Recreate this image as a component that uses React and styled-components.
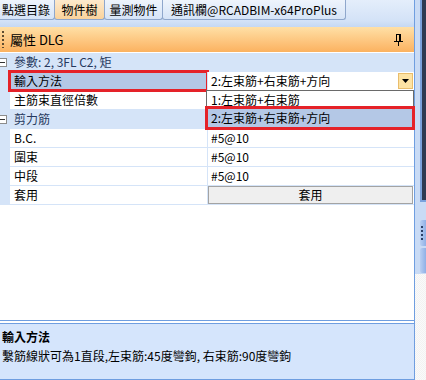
import React from 'react';
import styled, { createGlobalStyle } from 'styled-components';

const GlobalStyle = createGlobalStyle`
  html, body { margin: 0; padding: 0; background: #fff; }
  body { font-family: "Noto Sans CJK TC", "Noto Sans", sans-serif; font-size: 12px; color: #000; }
`;

const Page = styled.div`
  display: flex;
  width: 426px;
  height: 380px;
  overflow: hidden;
  background: #fff;
`;

const Panel = styled.div`
  width: 415px;
  box-sizing: border-box;
  display: flex;
  flex-direction: column;
  border-right: 1px solid #6f9ee0;
`;

const TabBar = styled.div`
  height: 21px;
  flex: none;
  display: flex;
  align-items: flex-start;
  background: linear-gradient(#e4eefb, #d3e2f7);
  margin-left: -3px;
`;

const Tab = styled.div`
  width: ${p => p.w}px;
  height: 20px;
  box-sizing: border-box;
  display: flex;
  align-items: center;
  justify-content: center;
  line-height: 18px;
  font-size: 12px;
  border: 1px solid #8fa7cc;
  border-top: none;
  border-radius: 0 0 3px 3px;
  margin-right: -1px;
  background: ${p => (p.active ? 'linear-gradient(#fde9cc, #fad39c)' : 'linear-gradient(#eef4fc, #d6e4f7)')};
`;

const TabStrip = styled.div`
  height: 6px;
  flex: none;
  background: linear-gradient(#d3e2f7, #c5d8f3);
`;

const Header = styled.div`
  height: 25px;
  flex: none;
  display: flex;
  align-items: center;
  padding: 0 11px 0 2px;
  background: linear-gradient(#ffe0a6, #fdc47c 60%, #fbb260);
`;

const Grip = styled.div`
  width: 2px;
  height: 17px;
  background: repeating-linear-gradient(to bottom, #5e4c30 0 2px, transparent 2px 4px);
`;

const Title = styled.div`
  flex: 1;
  margin-left: 6px;
  font-size: 13px;
  line-height: 16px;
`;

const GridArea = styled.div`
  flex: 1;
  display: flex;
  flex-direction: column;
  background: #fff;
  border-bottom: 1px solid #6f9ee0;
  padding-top: 1px;
`;

const Row = styled.div`
  display: grid;
  grid-template-columns: 10px 197px 1fr;
  height: 18px;
  border-bottom: 1px solid #d5e4f8;
  line-height: 18px;
  background: ${p => (p.category ? '#d5e4f8' : '#fff')};
`;

const Gutter = styled.div`
  background: #d5e4f8;
  display: flex;
  align-items: center;
  overflow: hidden;
`;

const CategoryText = styled.div`
  grid-column: 2 / 4;
  padding-left: 4px;
  color: #26395e;
  white-space: nowrap;
`;

const Label = styled.div`
  padding-left: 4px;
  white-space: nowrap;
  background: ${p => (p.selected ? '#b4c8e6' : 'transparent')};
  outline: ${p => (p.marked ? '3px solid #e52229' : 'none')};
  outline-offset: -1px;
  position: relative;
  z-index: ${p => (p.marked ? 2 : 'auto')};
`;

const Value = styled.div`
  position: relative;
  border-left: 1px solid #d5e4f8;
  padding-left: 3px;
  white-space: nowrap;
  display: flex;
  align-items: center;
  background: #fff;
  z-index: ${p => (p.open ? 4 : 'auto')};
`;

const ValueText = styled.span`
  flex: 1;
`;

const DropButton = styled.div`
  width: 15px;
  height: 16px;
  box-sizing: border-box;
  margin-right: 1px;
  border: 1px solid #e9bd6c;
  background: #fde3a4;
  display: flex;
  align-items: center;
  justify-content: center;
`;

const DropList = styled.div`
  position: absolute;
  top: 18px;
  left: -2px;
  right: 0;
  z-index: 5;
  background: #fff;
  border: 1px solid #6a6a6a;
  padding: 0 1px 1px;
`;

const DropItem = styled.div`
  height: 18px;
  line-height: 18px;
  padding-left: 3px;
  background: ${p => (p.selected ? '#b4c8e6' : '#fff')};
  outline: ${p => (p.selected ? '3px solid #e52229' : 'none')};
`;

const ApplyButton = styled.div`
  flex: 1;
  height: 18px;
  box-sizing: border-box;
  margin-left: -3px;
  margin-right: 1px;
  border: 1px solid #a3a3a3;
  background: #efefef;
  text-align: center;
  line-height: 16px;
`;

const Description = styled.div`
  height: 57px;
  flex: none;
  box-sizing: border-box;
  margin-top: 2px;
  border-top: 1px solid #6f9ee0;
  border-bottom: 1px solid #6f9ee0;
  background: #d5e5fc;
  padding: 3px 2px;
  line-height: 19px;
`;

const DescTitle = styled.div`
  font-weight: bold;
`;

const Side = styled.div`
  flex: 1;
  display: flex;
  flex-direction: column;
  background: #c9dbf5;
`;

const SideDark = styled.div`
  height: 200px;
  margin-left: 5px;
  border-left: 2px solid #7aa1dc;
  border-bottom: 2px solid #7aa1dc;
  background: #2e3a52;
`;

const SideButton = styled.div`
  height: ${p => p.h}px;
  margin: ${p => p.top}px 0 0 5px;
  border-radius: 2px 0 0 2px;
  background: linear-gradient(to right, #b9cff2, #8fb0e6);
  display: flex;
  align-items: center;
  padding-left: 1px;
`;

const SideGrip = styled.div`
  width: 2px;
  height: 15px;
  background: repeating-linear-gradient(to bottom, #2c3f66 0 2px, transparent 2px 4px);
`;

const SideRest = styled.div`
  flex: 1;
  margin-top: 1px;
  background: repeating-conic-gradient(#f2f2f2 0 25%, #fafafa 0 50%) 0 0 / 2px 2px;
`;

const Minus = () => (
  <svg width="9" height="9" viewBox="0 0 9 9" style={{ marginLeft: -2 }}>
    <rect x="0.5" y="0.5" width="8" height="8" fill="#fff" stroke="#8c8c8c" />
    <rect x="2" y="4" width="5" height="1" fill="#333" />
  </svg>
);

const Pin = () => (
  <svg width="9" height="12" viewBox="0 0 9 12">
    <rect x="2" y="0" width="5" height="1" fill="#000" />
    <rect x="2" y="0" width="1" height="7" fill="#000" />
    <rect x="5" y="0" width="2" height="7" fill="#000" />
    <rect x="0" y="7" width="9" height="1" fill="#000" />
    <rect x="4" y="8" width="1" height="4" fill="#000" />
  </svg>
);

const Arrow = () => (
  <svg width="7" height="4" viewBox="0 0 7 4">
    <path d="M0 0h7L3.5 4z" fill="#000" />
  </svg>
);

const tabs = [
  { label: '點選目錄', w: 58 },
  { label: '物件樹', w: 51, active: true },
  { label: '量測物件', w: 59 },
  { label: '通訊欄@RCADBIM-x64ProPlus', w: 184 },
];

const rebars = [
  { label: 'B.C.', value: '#5@10' },
  { label: '圍束', value: '#5@10' },
  { label: '中段', value: '#5@10' },
];

export default function App() {
  return (
    <>
      <GlobalStyle />
      <Page>
        <Panel>
          <TabBar>
            {tabs.map(t => (
              <Tab key={t.label} w={t.w} active={t.active}>{t.label}</Tab>
            ))}
          </TabBar>
          <TabStrip />
          <Header>
            <Grip />
            <Title>屬性 DLG</Title>
            <Pin />
          </Header>
          <GridArea>
            <Row category>
              <Gutter><Minus /></Gutter>
              <CategoryText>參數: 2, 3FL C2, 矩</CategoryText>
            </Row>
            <Row>
              <Gutter />
              <Label selected marked>輸入方法</Label>
              <Value open>
                <ValueText>2:左束筋+右束筋+方向</ValueText>
                <DropButton><Arrow /></DropButton>
                <DropList>
                  <DropItem>1:左束筋+右束筋</DropItem>
                  <DropItem selected>2:左束筋+右束筋+方向</DropItem>
                </DropList>
              </Value>
            </Row>
            <Row>
              <Gutter />
              <Label>主筋束直徑倍數</Label>
              <Value />
            </Row>
            <Row category>
              <Gutter><Minus /></Gutter>
              <CategoryText>剪力筋</CategoryText>
            </Row>
            {rebars.map(r => (
              <Row key={r.label}>
                <Gutter />
                <Label>{r.label}</Label>
                <Value>{r.value}</Value>
              </Row>
            ))}
            <Row>
              <Gutter />
              <Label>套用</Label>
              <Value><ApplyButton>套用</ApplyButton></Value>
            </Row>
          </GridArea>
          <Description>
            <DescTitle>輸入方法</DescTitle>
            <div>繫筋線狀可為1直段,左束筋:45度彎鉤, 右束筋:90度彎鉤</div>
          </Description>
        </Panel>
        <Side>
          <SideDark />
          <SideButton h={26} top={18}><SideGrip /></SideButton>
          <SideButton h={25} top={2} />
          <SideRest />
        </Side>
      </Page>
    </>
  );
}
